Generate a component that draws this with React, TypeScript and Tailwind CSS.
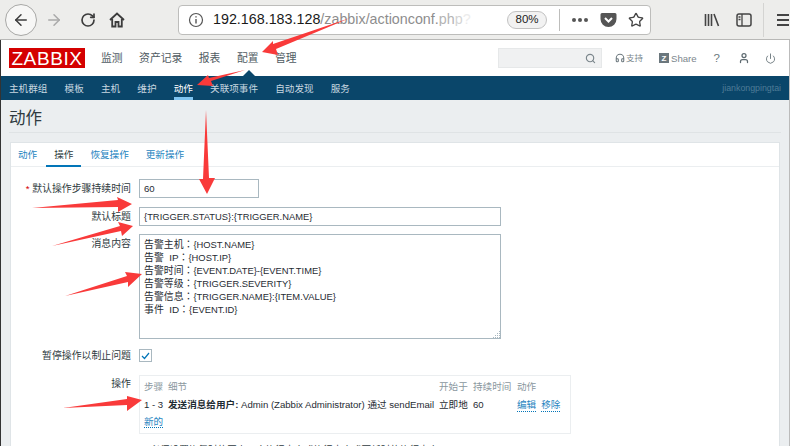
import React from 'react';
import { ArrowLeft, ArrowRight, RotateCw, Search, Headphones, User, Power, Star } from 'lucide-react';

const mainMenu = ['监测', '资产记录', '报表', '配置', '管理'];
const subMenu = ['主机群组', '模板', '主机', '维护', '动作', '关联项事件', '自动发现', '服务'];
const tabs = ['动作', '操作', '恢复操作', '更新操作'];
const messageLines = [
  ['告警主机：', '{HOST.NAME}'],
  ['告警  IP：', '{HOST.IP}'],
  ['告警时间：', '{EVENT.DATE}-{EVENT.TIME}'],
  ['告警等级：', '{TRIGGER.SEVERITY}'],
  ['告警信息：', '{TRIGGER.NAME}:{ITEM.VALUE}'],
  ['事件  ID：', '{EVENT.ID}'],
];

// red annotation arrows drawn over the screenshot
const arrows = [
  '350,18 273,44 273,41 262,52 278,55 276,49',
  '245,70 209,78 208,75 197,85 213,86 211,81',
  '206,110 203,179 199,179 207,194 215,178 209,178',
  '32,208 118,200 117,197 132,204 118,212 118,207',
  '52,246 120,226 118,222 133,226 122,236 121,231',
  '65,296 127,276 125,272 142,274 128,287 128,282',
  '63,408 127,399 127,396 142,400 127,411 127,405',
];

const Label: React.FC<{ children: React.ReactNode }> = ({ children }) => (
  <div className="w-[120px] shrink-0 whitespace-nowrap text-right text-[9.9px] text-[#2f3b41]">{children}</div>
);

const App: React.FC = () => {
  return (
    <div className="relative h-[446px] w-[790px] overflow-hidden bg-[#ebeef0] text-[9.6px] leading-[13px] text-[#1f2c33] font-['Liberation_Sans','Noto_Sans_CJK_SC',sans-serif]">
      {/* browser toolbar */}
      <div className="flex h-[40px] items-center border-b border-[#b8b8b6] bg-[#ededeb] pl-[5px] text-[#3c3c3c]">
        <div className="flex h-[32px] w-[32px] items-center justify-center rounded-full border border-[#a8a8a6] bg-[#f7f7f6]">
          <ArrowLeft size={18} strokeWidth={2} />
        </div>
        <ArrowRight size={18} strokeWidth={2} className="ml-[8px] text-[#a9a9a9]" />
        <RotateCw size={16} strokeWidth={2.5} className="ml-[17px]" />
        <svg width="16" height="16" viewBox="0 0 16 16" className="ml-[13px]">
          <path d="M1 8 8 1.5 15 8M3.2 7v7.5h3.3V10h3v4.5h3.3V7" fill="none" stroke="#3c3c3c" strokeWidth="1.8" />
        </svg>
        <div className="ml-[53px] flex h-[30px] w-[473px] items-center rounded-[4px] border border-[#bdbdbb] bg-white">
          <svg width="16" height="16" viewBox="0 0 16 16" className="ml-[9px]">
            <circle cx="8" cy="8" r="6.5" fill="none" stroke="#555" strokeWidth="1.2" />
            <path d="M8 7v4.5M8 4.2v1.4" stroke="#555" strokeWidth="1.4" />
          </svg>
          <div className="ml-[9px] w-[286px] overflow-hidden whitespace-nowrap text-[14.3px] text-[#8d8d8d]">
            <span className="text-[#1a1a1a]">192.168.183.128</span>/zabbix/actionconf.<span className="text-[#b4b4b4]">ph</span><span className="text-[#d4d4d4]">p</span><span className="text-[#ececec]">?</span>
          </div>
          <div className="ml-[8px] flex h-[18px] w-[40px] items-center justify-center rounded-full border border-[#c2c2c2] bg-[#f2f2f2] text-[11.5px] text-[#222]">80%</div>
          <div className="ml-[12px] h-[22px] w-px bg-[#bdbdbb]" />
          <div className="ml-[12px] flex gap-[2px]">
            <span className="h-[4px] w-[4px] rounded-full bg-[#555]" />
            <span className="h-[4px] w-[4px] rounded-full bg-[#555]" />
            <span className="h-[4px] w-[4px] rounded-full bg-[#555]" />
          </div>
          <svg width="17" height="16" viewBox="0 0 17 16" className="ml-[12px]">
            <path d="M2 1h13a1.5 1.5 0 0 1 1.5 1.5V7a8 8 0 0 1-16 0V2.500A1.500 1.500 0 0 1 2 1z" fill="#555" />
            <path d="M5 6l3.500 3.500L12 6" fill="none" stroke="#fff" strokeWidth="2" />
          </svg>
          <Star size={16} strokeWidth={2} className="ml-[11px] text-[#444]" />
        </div>
        <svg width="16" height="14" viewBox="0 0 16 14" className="ml-[53px]">
          <path d="M1.500 1v12M4.500 1v12M7.500 1v12M10 1l4.500 12" fill="none" stroke="#444" strokeWidth="1.600" />
        </svg>
        <svg width="16" height="14" viewBox="0 0 16 14" className="ml-[16px]">
          <rect x="1" y="1" width="14" height="12" rx="2" fill="none" stroke="#444" strokeWidth="1.500" />
          <path d="M6 1v12M2.500 4h2M2.500 6.500h2" stroke="#444" strokeWidth="1.300" />
        </svg>
        <div className="ml-[11px] h-[34px] w-px bg-[#d4d4d2]" />
        <div className="ml-[13px] flex flex-col gap-[3px]">
          <span className="h-[2px] w-[12px] bg-[#444]" />
          <span className="h-[2px] w-[12px] bg-[#444]" />
          <span className="h-[2px] w-[12px] bg-[#444]" />
        </div>
      </div>

      <div className="border-l border-[#333] border-r border-r-[#bbb]">
        {/* zabbix header */}
        <div className="relative flex h-[36px] items-center bg-white pl-[8px] pr-[13px]">
          <div className="flex h-[20px] w-[76px] items-center justify-center bg-[#d40000] text-[19px] tracking-[0.6px] text-white">ZABBIX</div>
          <div className="ml-[16px] flex gap-[16.5px] text-[10.8px] text-[#4f5b62]">
            {mainMenu.map(item => <span key={item}>{item}</span>)}
          </div>
          <div className="ml-auto flex h-[20px] w-[104px] items-center justify-end border border-[#e6e8e9] bg-[#f0f1f2] pr-[5px] text-[#7b868c]">
            <Search size={11} strokeWidth={2.5} />
          </div>
          <Headphones size={10} strokeWidth={2.5} className="ml-[13px] text-[#6b777d]" />
          <span className="ml-[1px] text-[8.5px] text-[#7b868c]">支持</span>
          <span className="ml-[16px] flex h-[10px] w-[10px] items-center justify-center bg-[#6b777d] text-[8px] font-bold text-white">Z</span>
          <span className="ml-[2px] text-[#7b868c]">Share</span>
          <span className="ml-[17px] text-[11.5px] text-[#6b777d]">?</span>
          <User size={12} strokeWidth={2.5} className="ml-[18px] text-[#5f6b71]" />
          <Power size={11} strokeWidth={2} className="ml-[15px] text-[#6b777d]" />
          <span className="absolute left-[242px] top-[30px] h-0 w-0 border-x-[6px] border-b-[6px] border-x-transparent border-b-[#0a466a]" />
        </div>

        {/* sub navigation */}
        <div className="flex h-[24px] items-stretch justify-between bg-[#0a466a] pl-[8px] pr-[8px] text-[#c7d7e0]">
          <div className="flex gap-[17.2px]">
            {subMenu.map(item => (
              <span key={item} className={item === '动作' ? 'border-b-[3px] border-[#80c4f0] pt-[6px] text-white' : 'pt-[6px]'}>{item}</span>
            ))}
          </div>
          <span className="pt-[6px] text-[8.8px] text-[#4f7c97]">jiankongpingtai</span>
        </div>

        {/* page title */}
        <div className="mx-[8px] h-[33px] border-b border-[#dfe3e5] pt-[8px] text-[16.5px] leading-[20px] text-[#2f3b41]">动作</div>

        {/* form card */}
        <div className="mx-[9px] mt-[9px] h-[320px] border border-[#dfe4e7] bg-white">
          <div className="flex h-[24px] gap-[17px] border-b border-[#ebeef0] pl-[7px]">
            {tabs.map(item => (
              <span key={item} className={item === '操作' ? '-mx-[8px] -mb-px border-b-2 border-[#0275b8] px-[8px] pt-[5px] text-[#2f3b41]' : 'pt-[5px] text-[#1f85bf]'}>{item}</span>
            ))}
          </div>

          <div className="pt-[12px]">
            <div className="flex items-center gap-[8px]">
              <Label><span className="text-[#d40000]">* </span>默认操作步骤持续时间</Label>
              <div className="flex h-[19px] w-[120px] items-center border border-[#a9b8c0] pl-[4px]">60</div>
            </div>
            <div className="mt-[9px] flex items-center gap-[8px]">
              <Label>默认标题</Label>
              <div className="flex h-[19px] w-[362px] items-center border border-[#a9b8c0] pl-[4px] text-[9.4px]">{'{TRIGGER.STATUS}:{TRIGGER.NAME}'}</div>
            </div>
            <div className="mt-[8px] flex gap-[8px]">
              <div className="pt-[3px]"><Label>消息内容</Label></div>
              <div className="relative h-[105px] w-[362px] whitespace-pre border border-[#a9b8c0] pl-[4px] pt-[3px] font-['Liberation_Sans','Noto_Sans_CJK_TC',sans-serif]">
                {messageLines.map(([name, macro]) => (
                  <div key={macro}>
                    <span className="text-[9.9px]">{name}</span>
                    <span className="text-[9.4px]">{macro}</span>
                  </div>
                ))}
                <svg width="8" height="8" viewBox="0 0 8 8" className="absolute bottom-0 right-0">
                  <path d="M7 1h1v1H7zM5 3h1v1H5zM7 3h1v1H7zM3 5h1v1H3zM5 5h1v1H5zM7 5h1v1H7zM1 7h1v1H1zM3 7h1v1H3zM5 7h1v1H5zM7 7h1v1H7z" fill="#a9b8c0" />
                </svg>
              </div>
            </div>
            <div className="mt-[10px] flex items-center gap-[8px]">
              <Label>暂停操作以制止问题</Label>
              <div className="flex h-[13px] w-[13px] items-center justify-center border border-[#a9b8c0]">
                <svg width="9" height="8" viewBox="0 0 9 8">
                  <path d="M1 4l2.500 2.500L8 1" fill="none" stroke="#0275b8" strokeWidth="1.200" />
                </svg>
              </div>
            </div>
            <div className="mt-[13px] flex gap-[8px]">
              <div className="pt-[2px]"><Label>操作</Label></div>
              <div className="h-[59px] w-[432px] border border-[#ebeef0] px-[4px] pt-[4px]">
                <div className="flex text-[#8a979e]">
                  <span className="w-[24px]">步骤</span>
                  <span className="w-[271px]">细节</span>
                  <span className="w-[34px]">开始于</span>
                  <span className="w-[44px]">持续时间</span>
                  <span>动作</span>
                </div>
                <div className="mt-[5px] flex whitespace-nowrap">
                  <span className="w-[24px]">1 - 3</span>
                  <span className="w-[271px]"><b>发送消息给用户:</b> Admin (Zabbix Administrator) 通过 sendEmail</span>
                  <span className="w-[34px]">立即地</span>
                  <span className="w-[44px]">60</span>
                  <span className="border-b border-dotted border-[#0275b8] text-[#1f85bf]">编辑</span>
                  <span className="ml-[5px] border-b border-dotted border-[#0275b8] text-[#1f85bf]">移除</span>
                </div>
                <div className="mt-[3px]">
                  <span className="border-b border-dotted border-[#0275b8] text-[#1f85bf]">新的</span>
                </div>
              </div>
            </div>
            <div className="ml-[133px] mt-[9px] whitespace-nowrap text-[#2f3b41]">* 必须设置恢复时的至少一个执行内容或执行内容或更新时的执行内容。</div>
          </div>
        </div>
      </div>

      {/* annotation arrows */}
      <svg width="790" height="446" viewBox="0 0 790 446" className="pointer-events-none absolute left-0 top-0">
        {arrows.map(points => <polygon key={points} points={points} fill="#f93a3a" />)}
      </svg>
    </div>
  );
};

export default App;
